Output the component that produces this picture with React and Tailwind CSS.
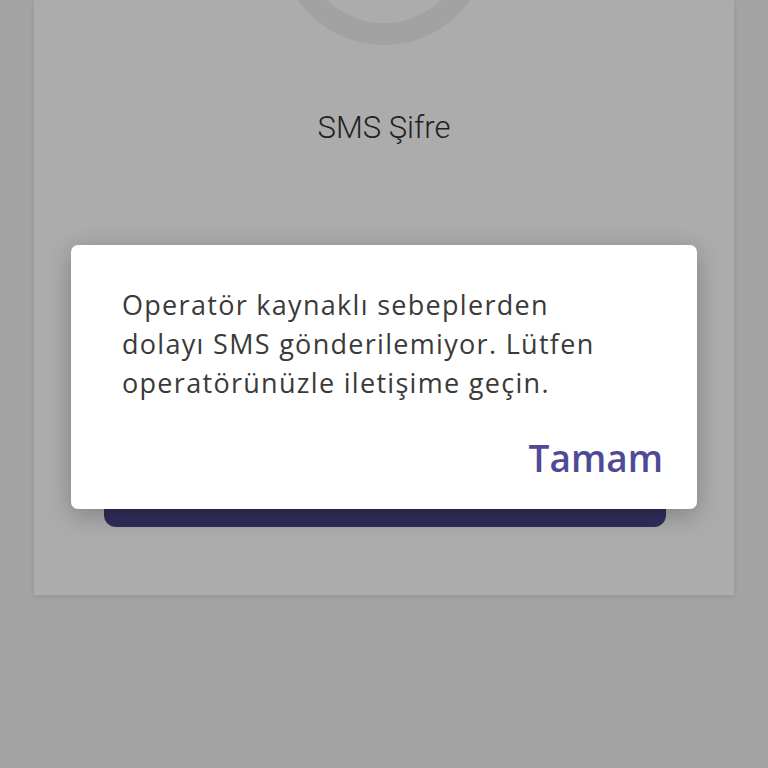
export default function App() {
  return (
    <div className="relative w-[768px] h-[768px] overflow-hidden bg-[#a3a3a3]" style={{ fontFamily: "'Open Sans', sans-serif" }}>
      <div className="ml-[34px] w-[700px] h-[595px] bg-[#acacac] flex flex-col items-center shadow-[0_2px_6px_rgba(0,0,0,0.08)]">
        <div className="mt-[-165px] w-[210px] h-[210px] rounded-full border-[22px] border-[#a2a2a2] shrink-0"></div>
        <div className="mt-[63px] text-[31px] leading-[40px] font-light text-[#222222]" style={{ fontFamily: "Roboto, sans-serif" }}>SMS Şifre</div>
        <div className="mt-[323px] w-[562px] h-[56px] rounded-[12px] bg-[#302e5a] shrink-0 ml-[1px]"></div>
      </div>
      <div className="absolute left-[71px] top-[245px] w-[626px] h-[264px] bg-white rounded-[7px] shadow-[0_6px_24px_rgba(0,0,0,0.25)] pl-[51px] pr-[20px] pt-[40px]">
        <p className="text-[27px] leading-[39px] text-[#3a3a3a] tracking-[1.3px] whitespace-nowrap">
          Operatör kaynaklı sebeplerden<br />dolayı SMS gönderilemiyor. Lütfen<br />operatörünüzle iletişime geçin.
        </p>
        <div className="flex justify-end mt-[34px] pr-[14px]">
          <span className="text-[37px] leading-[44px] font-semibold text-[#4f4a96]">Tamam</span>
        </div>
      </div>
    </div>
  );
}
